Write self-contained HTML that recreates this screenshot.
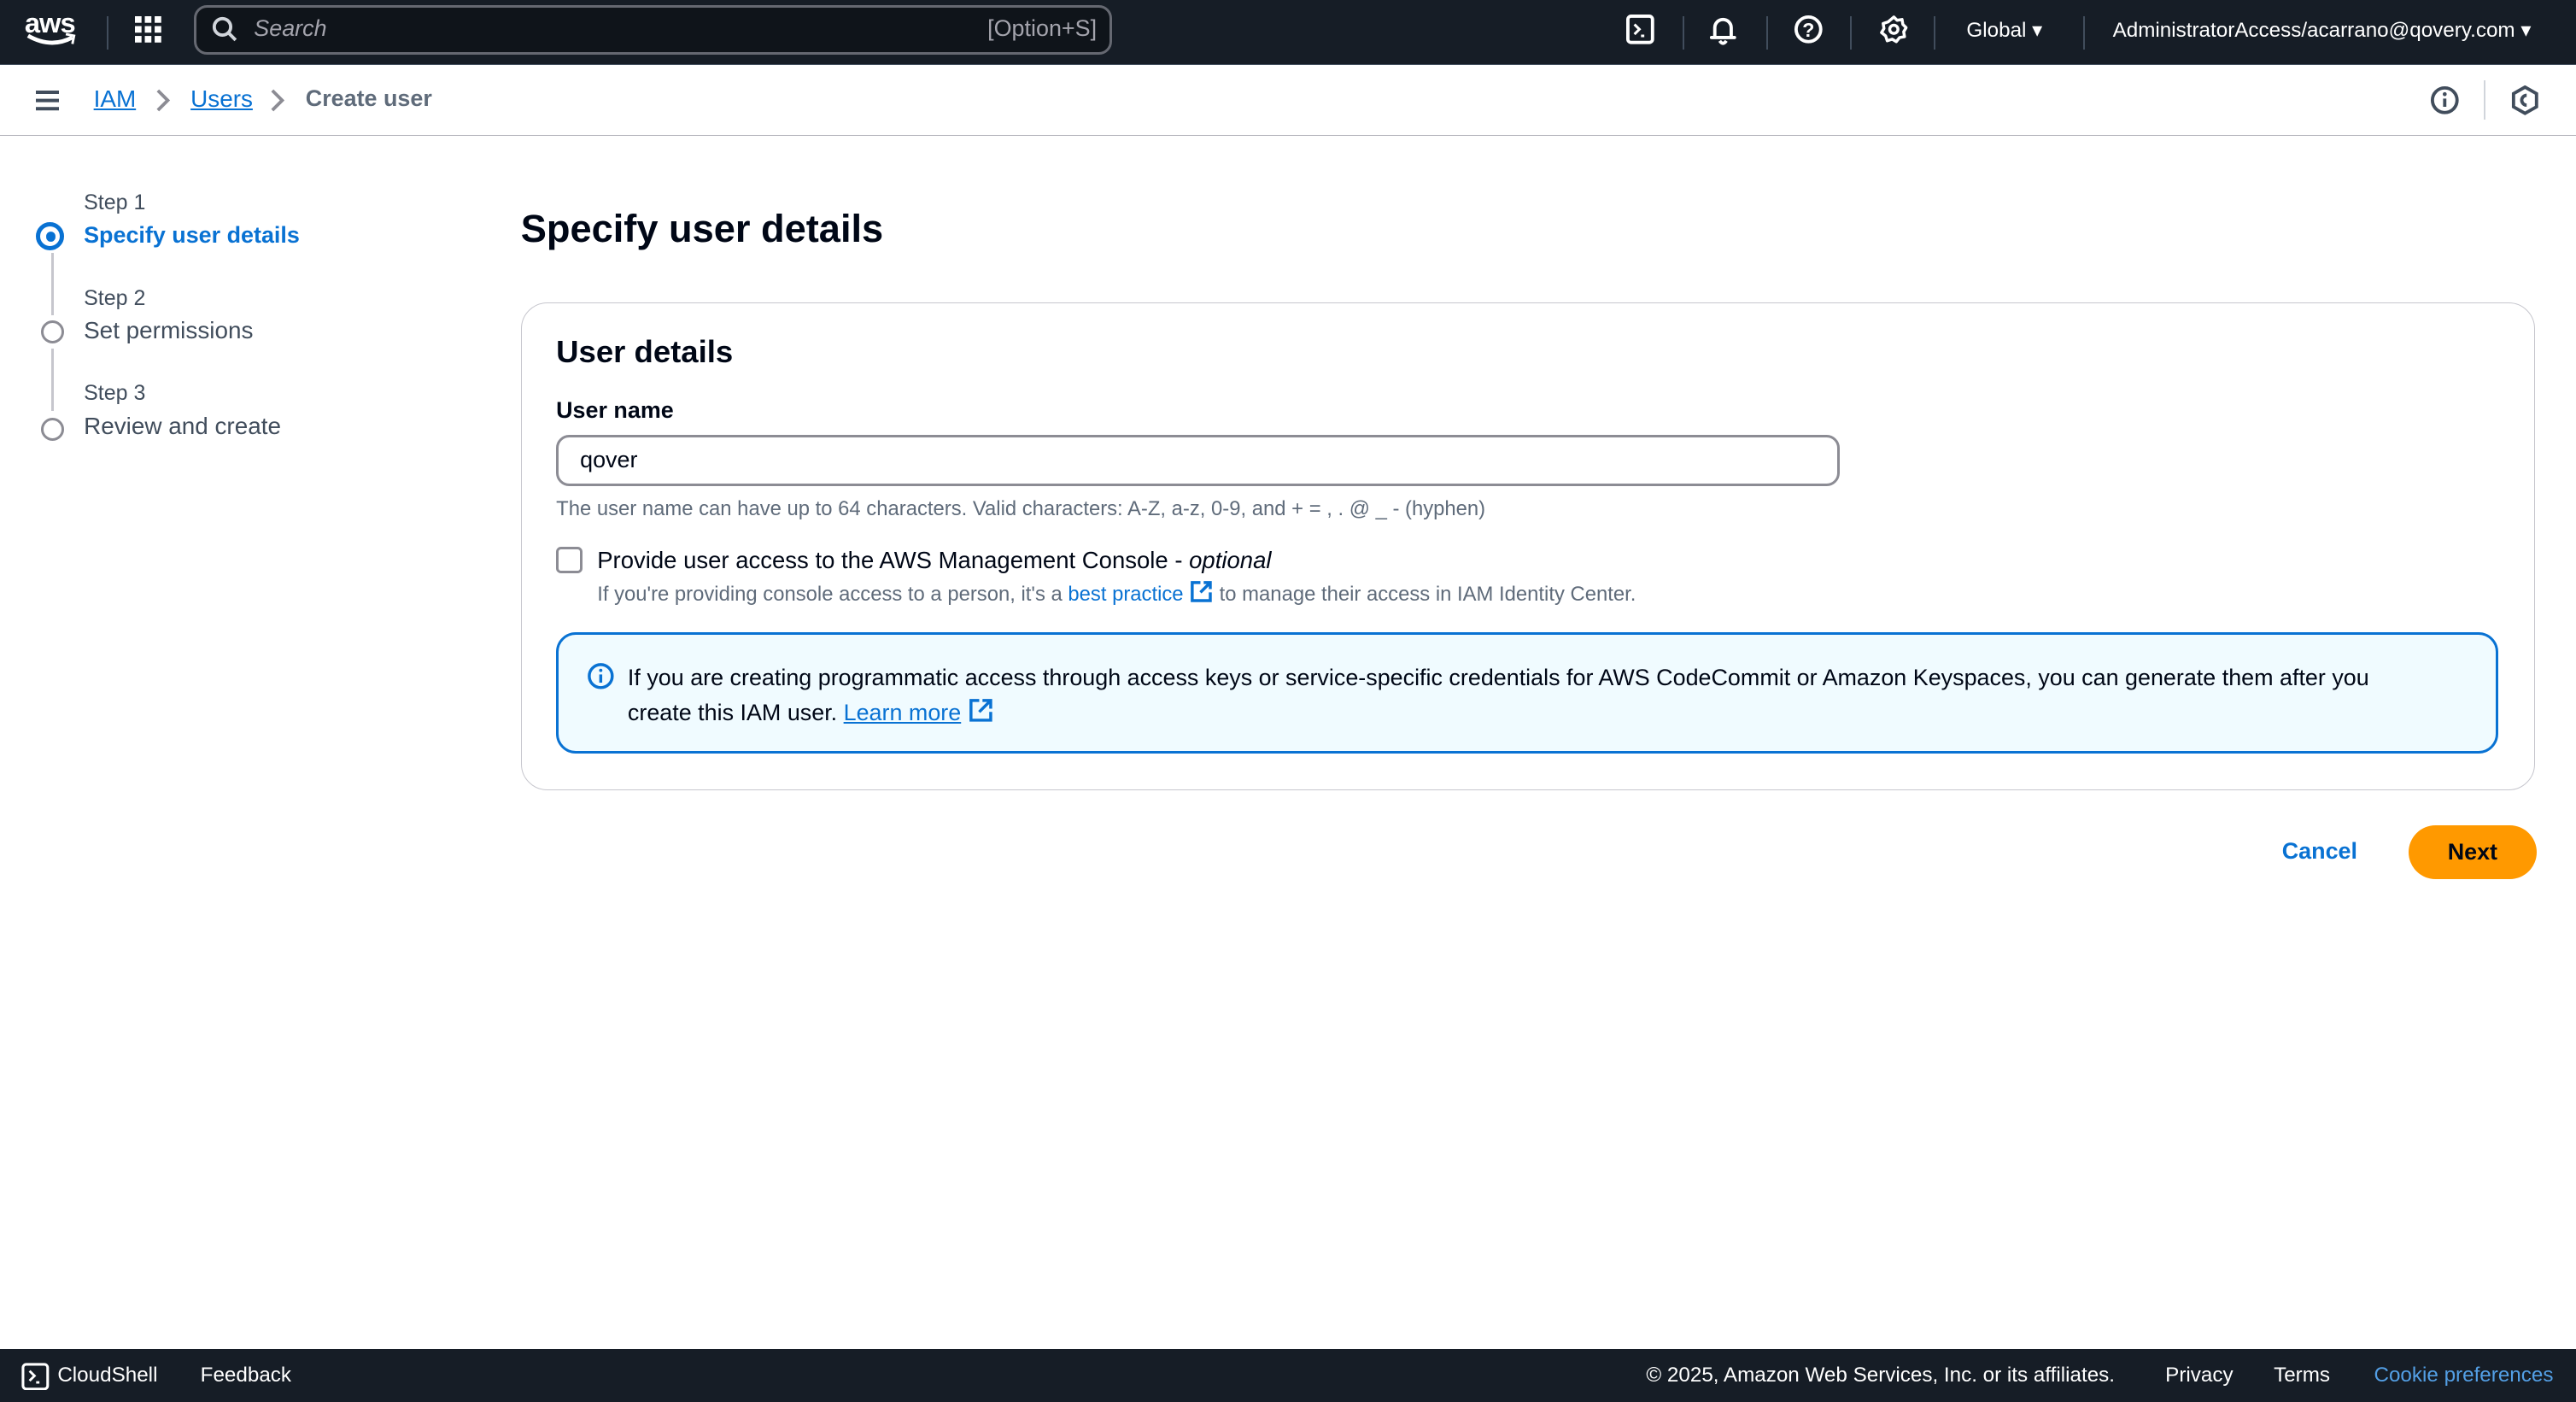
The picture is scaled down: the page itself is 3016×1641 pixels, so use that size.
<!DOCTYPE html>
<html><head><meta charset="utf-8"><style>
html,body{margin:0;padding:0}
body{width:1568px;height:853px;zoom:1.9235;font-family:"Liberation Sans",sans-serif;color:#000716;background:#fff;position:relative;overflow:hidden}
.top{position:absolute;left:0;top:0;width:1568px;height:39px;background:#161d26;border-bottom:1px solid #414d5c}
.abs{position:absolute}
.w{color:#fff}
.sep{position:absolute;top:10px;width:1px;height:20px;background:#414d5c}
.search{position:absolute;left:118px;top:3px;width:556px;height:27px;border:2px solid #656871;border-radius:8px;background:#0f141a}
.bc{position:absolute;top:40px;left:0;width:1568px;height:42px;border-bottom:1px solid #b4b4bb}
a{color:#0972d3}
.step{position:absolute;left:51px;font-size:13px;color:#414d5c}
.sl{position:absolute;left:51px;font-size:14.5px;color:#414d5c}
.circ{position:absolute;left:25px;width:11px;height:11px;border:2px solid #8c8c94;border-radius:50%}
.card{position:absolute;left:317px;top:184px;width:1225px;height:296px;border:1px solid #c6c6cd;border-radius:16px}
.foot{position:absolute;left:0;top:821px;width:1568px;height:32px;background:#161d26;color:#fff;font-size:12.6px}
.ext{display:inline-block;vertical-align:-2px}
</style></head><body>
<div class="top">
 <div class="abs w" style="left:15px;top:4px;font-size:17px;font-weight:bold;letter-spacing:-0.5px">aws</div>
 <svg class="abs" style="left:15px;top:20px" width="32" height="10"><path d="M2 2 Q16 10 29 3" stroke="#fff" stroke-width="2.5" fill="none"/><path d="M25 1 L30 2 L29 7" stroke="#fff" stroke-width="1.5" fill="none"/></svg>
 <div class="sep" style="left:65px"></div>
 <svg class="abs" style="left:82px;top:10px" width="17" height="17" fill="#fff"><rect x="0" y="0" width="4" height="4"/><rect x="6" y="0" width="4" height="4"/><rect x="12" y="0" width="4" height="4"/><rect x="0" y="6" width="4" height="4"/><rect x="6" y="6" width="4" height="4"/><rect x="12" y="6" width="4" height="4"/><rect x="0" y="12" width="4" height="4"/><rect x="6" y="12" width="4" height="4"/><rect x="12" y="12" width="4" height="4"/></svg>
 <div class="search">
  <svg class="abs" style="left:9px;top:5px" width="16" height="16"><circle cx="7" cy="7" r="5" stroke="#d1d5db" stroke-width="2" fill="none"/><path d="M11 11 L15 15" stroke="#d1d5db" stroke-width="2"/></svg>
  <div class="abs" style="left:35px;top:5px;font-size:14px;font-style:italic;color:#a4a4ad">Search</div>
  <div class="abs" style="right:8px;top:5px;font-size:14px;color:#a4a4ad">[Option+S]</div>
 </div>
 <svg class="abs" style="left:990px;top:9px" width="17" height="18"><rect x="1" y="1" width="15" height="16" rx="2" stroke="#fff" stroke-width="2" fill="none"/><path d="M5 6 L8 9 L5 12 M9 13 H11" stroke="#fff" stroke-width="1.6" fill="none"/></svg>
 <div class="sep" style="left:1024px"></div>
 <svg class="abs" style="left:1040px;top:9px" width="18" height="19"><path d="M4 14 V8 A5 5 0 0 1 14 8 V14 H16 H2 Z" stroke="#fff" stroke-width="2" fill="none" stroke-linejoin="round"/><path d="M7 16 Q9 19 11 16" stroke="#fff" stroke-width="2" fill="none"/></svg>
 <div class="sep" style="left:1075px"></div>
 <svg class="abs" style="left:1092px;top:9px" width="18" height="18"><circle cx="9" cy="9" r="7.5" stroke="#fff" stroke-width="2" fill="none"/><text x="9" y="13.5" font-size="12" font-weight="bold" fill="#fff" text-anchor="middle" font-family="Liberation Sans">?</text></svg>
 <div class="sep" style="left:1126px"></div>
 <svg class="abs" style="left:1144px;top:9px" width="18" height="18"><path d="M9 1.5 L11 3.5 L14 3 L14.5 6 L16.5 8 L15 10.5 L15.5 13.5 L12.5 14 L10.5 16.5 L8 15 L5 16 L4 13 L1.5 11 L3 8.5 L2.5 5.5 L5.5 4.5 Z" stroke="#fff" stroke-width="1.8" fill="none" stroke-linejoin="round"/><circle cx="9" cy="9" r="2.5" stroke="#fff" stroke-width="1.8" fill="none"/></svg>
 <div class="sep" style="left:1177px"></div>
 <div class="abs w" style="left:1197px;top:11px;font-size:12.6px">Global ▾</div>
 <div class="sep" style="left:1268px"></div>
 <div class="abs w" style="left:1286px;top:11px;font-size:12.6px">AdministratorAccess/acarrano@qovery.com ▾</div>
</div>
<div class="bc">
 <div class="abs" style="left:22px;top:15px;width:14px;height:2px;background:#414d5c;box-shadow:0 5px 0 #414d5c,0 10px 0 #414d5c"></div>
 <a class="abs" style="left:57px;top:12px;font-size:14.5px;text-decoration:underline">IAM</a>
 <svg class="abs" style="left:94px;top:14px" width="10" height="14"><path d="M2 1 L8 7 L2 13" stroke="#8c8c94" stroke-width="2" fill="none"/></svg>
 <a class="abs" style="left:116px;top:12px;font-size:14.5px;text-decoration:underline">Users</a>
 <svg class="abs" style="left:164px;top:14px" width="10" height="14"><path d="M2 1 L8 7 L2 13" stroke="#8c8c94" stroke-width="2" fill="none"/></svg>
 <div class="abs" style="left:186px;top:12px;font-size:14px;font-weight:bold;color:#5f6b7a">Create user</div>
 <svg class="abs" style="left:1479px;top:12px" width="18" height="18"><circle cx="9" cy="9" r="7.5" stroke="#414d5c" stroke-width="2" fill="none"/><path d="M9 8 V13" stroke="#414d5c" stroke-width="2"/><circle cx="9" cy="5.3" r="1.2" fill="#414d5c"/></svg>
 <div class="abs" style="left:1512px;top:9px;width:1px;height:24px;background:#d1d5db"></div>
 <svg class="abs" style="left:1528px;top:12px" width="18" height="18"><path d="M9 1 L16 5 V13 L9 17 L2 13 V5 Z" stroke="#414d5c" stroke-width="2" fill="none"/><path d="M10 6 A3 3 0 1 0 10 12" stroke="#414d5c" stroke-width="2" fill="none"/></svg>
</div>
<div class="step" style="top:116px">Step 1</div>
<div class="abs" style="left:22px;top:135px;width:12px;height:12px;border:3px solid #0972d3;border-radius:50%;background:#fff"></div>
<div class="abs" style="left:29px;top:142px;width:4px;height:4px;background:#0972d3;border-radius:50%;box-shadow:0 0 0 1px #0972d3"></div>
<div class="sl" style="top:135px;color:#0972d3;font-weight:bold;font-size:14px">Specify user details</div>
<div class="abs" style="left:31px;top:154px;width:2px;height:38px;background:#c6c6cd"></div>
<div class="step" style="top:174px">Step 2</div>
<div class="circ" style="top:195px"></div>
<div class="sl" style="top:193px">Set permissions</div>
<div class="abs" style="left:31px;top:212px;width:2px;height:38px;background:#c6c6cd"></div>
<div class="step" style="top:232px">Step 3</div>
<div class="circ" style="top:254px"></div>
<div class="sl" style="top:251px">Review and create</div>
<div class="abs" style="left:317px;top:126px;font-size:23.5px;font-weight:bold">Specify user details</div>
<div class="card">
 <div class="abs" style="left:21px;top:19px;font-size:19px;font-weight:bold">User details</div>
 <div class="abs" style="left:21px;top:57px;font-size:14px;font-weight:bold">User name</div>
 <div class="abs" style="left:21px;top:80px;width:778px;height:28px;border:2px solid #8c8c94;border-radius:8px"><div class="abs" style="left:13px;top:6px;font-size:14px">qover</div></div>
 <div class="abs" style="left:21px;top:118px;font-size:12.4px;color:#5f6b7a">The user name can have up to 64 characters. Valid characters: A-Z, a-z, 0-9, and + = , . @ _ - (hyphen)</div>
 <div class="abs" style="left:21px;top:148px;width:13px;height:13px;border:2px solid #8c8c94;border-radius:3px"></div>
 <div class="abs" style="left:46px;top:148px;font-size:14.3px">Provide user access to the AWS Management Console - <i>optional</i></div>
 <div class="abs" style="left:46px;top:168px;font-size:12.4px;color:#5f6b7a">If you're providing console access to a person, it's a <span style="color:#0972d3">best practice <svg class="ext" width="15" height="15"><path d="M7 2 H2 V13 H13 V8 M9 2 H13 V6 M13 2 L7 8" stroke="#0972d3" stroke-width="1.8" fill="none"/></svg></span> to manage their access in IAM Identity Center.</div>
 <div class="abs" style="left:21px;top:200px;width:1179px;height:71px;border:2px solid #0972d3;border-radius:12px;background:#f0fbff">
  <svg class="abs" style="left:17px;top:17px" width="17" height="17"><circle cx="8.5" cy="8.5" r="7" stroke="#0972d3" stroke-width="1.8" fill="none"/><path d="M8.5 7.5 V12.5" stroke="#0972d3" stroke-width="1.8"/><circle cx="8.5" cy="5" r="1" fill="#0972d3"/></svg>
  <div class="abs" style="left:42px;top:16px;font-size:14px;line-height:21px;width:1090px">If you are creating programmatic access through access keys or service-specific credentials for AWS CodeCommit or Amazon Keyspaces, you can generate them after you create this IAM user. <a style="text-decoration:underline">Learn more</a> <svg class="ext" width="16" height="16"><path d="M7 2 H2 V14 H14 V9 M9 2 H14 V7 M14 2 L7 9" stroke="#0972d3" stroke-width="1.8" fill="none"/></svg></div>
 </div>
</div>
<div class="abs" style="left:1389px;top:510px;font-size:14px;font-weight:bold;color:#0972d3">Cancel</div>
<div class="abs" style="left:1466px;top:502px;width:78px;height:33px;background:#ff9900;border-radius:17px;font-size:14px;font-weight:bold;text-align:center;line-height:33px">Next</div>
<div class="foot">
 <svg class="abs" style="left:13px;top:8px" width="17" height="17"><rect x="1" y="1" width="15" height="15" rx="2" stroke="#fff" stroke-width="1.6" fill="none"/><path d="M5 5 L8 8 L5 11 M9 12 H11" stroke="#fff" stroke-width="1.5" fill="none"/></svg>
 <div class="abs" style="left:35px;top:9px">CloudShell</div>
 <div class="abs" style="left:122px;top:9px">Feedback</div>
 <div class="abs" style="left:1002px;top:9px">© 2025, Amazon Web Services, Inc. or its affiliates.</div>
 <div class="abs" style="left:1318px;top:9px">Privacy</div>
 <div class="abs" style="left:1384px;top:9px">Terms</div>
 <div class="abs" style="left:1445px;top:9px;color:#539fe5">Cookie preferences</div>
</div>
</body></html>
